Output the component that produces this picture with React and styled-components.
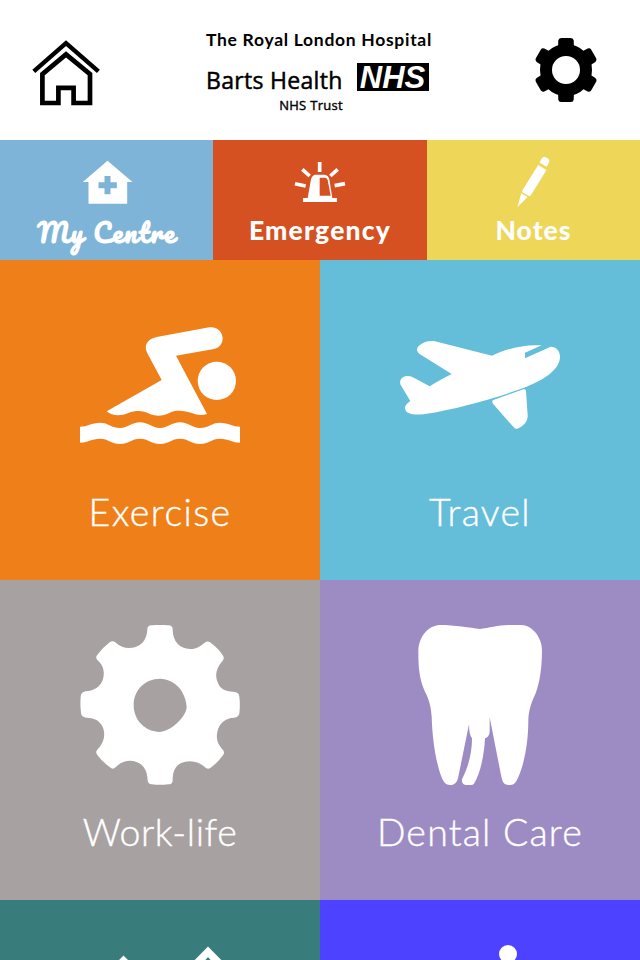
import React from "react";
import styled, { createGlobalStyle } from "styled-components";

const GlobalStyle = createGlobalStyle`
  * {
    box-sizing: border-box;
  }
  body {
    margin: 0;
    background: #fff;
    font-family: Lato, "Open Sans", sans-serif;
  }
`;

function HomeIcon() {
  return (
    <svg width="72" height="72" viewBox="30 34.5 72 72" fill="none" stroke="#000">
      <path d="M33.8 71.9 66 43.6 98.4 71.9" strokeWidth="4.4" />
      <path
        d="M42.4 103.5V74.6L66 54.9 90 74.6v28.9H73.6V88.3H58.4v15.2Z"
        strokeWidth="4.7"
      />
    </svg>
  );
}

function SettingsIcon() {
  return (
    <svg width="72" height="72" viewBox="-36 -36 72 72">
      {[0, 60, 120, 180, 240, 300].map((angle) => (
        <path
          key={angle}
          d="M-8-22-7.7-29.5Q-7.4-32-4.9-32H4.9Q7.4-32 7.7-29.5L8-22Z"
          transform={`rotate(${angle})`}
        />
      ))}
      <circle r="20" fill="none" stroke="#000" strokeWidth="12" />
    </svg>
  );
}

function CentreIcon() {
  return (
    <TabSvg viewBox="229.5 48 180 156">
      <path
        fillRule="evenodd"
        d="M321 62 396 126H380V191H264V126H247ZM312 108V127H294V145H312V163H330V145H349V127H330V108Z"
      />
    </TabSvg>
  );
}

function SirenIcon() {
  return (
    <TabSvg viewBox="231 48 180 156">
      <path
        fillRule="evenodd"
        d="M270 174H284L294 118Q297 104 309 104H334Q346 105 349 118L358 174H372V186H270ZM320 113V167H353L344 120Q342 113 335 113Z"
      />
      <path
        d="M320 66V96M268 88 290 108M374 88 352 108M246 131 278 138M396 131 365 137"
        stroke="#fff"
        strokeWidth="11"
      />
    </TabSvg>
  );
}

function PencilIcon() {
  return (
    <TabSvg viewBox="229.5 48 180 156">
      <path d="M336 68 343 55Q346 50 353 51 360 53 365 59 367 63 364 68L358 80Z" />
      <path d="M332 75 357 90 310 166Q307 169 303 167L286 158Q282 155 285 151Z" />
      <path d="M281 160 300 171 270 202Z" />
    </TabSvg>
  );
}

function SwimIcon() {
  return (
    <TileSvg viewBox="60 -15 480 480">
      <path d="M140 304 305 210 262 130C250 105 262 88 290 81L448 52C470 48 488 65 488 85 488 103 476 114 462 117L348 137 441 312C425 317 410 315 398 310 370 300 345 300 330 308 310 318 290 320 270 312 250 302 230 300 205 309 180 320 155 317 140 304Z" />
      <circle cx="470.5" cy="212.5" r="57.5" />
      <path d="M60 350C82 350 95 338 120 338S155 354 180 354 215 337 240 337 275 354 300 354 335 337 360 337 395 354 420 354 455 338 480 338 518 350 540 350V398C518 398 505 386 480 386S445 402 420 402 385 386 360 386 325 402 300 402 265 386 240 386 205 402 180 402 145 386 120 386 82 398 60 398Z" />
    </TileSvg>
  );
}

function PlaneIcon() {
  return (
    <TileSvg viewBox="60 -45 480 480">
      <path d="M75 265C75 255 82 250 91 243L62 195C56 180 68 168 82 168 92 168 100 172 107 176L149 199C170 185 195 172 215 162L120 103C108 95 108 82 120 75 133 64 148 61 165 64L336 107C375 88 430 72 485 76L435 98V115L512 80C530 80 541 95 540 112 539 150 490 180 440 200 350 235 220 268 150 280 110 287 76 285 75 265Z" />
      <path d="M340 240 430 208Q437 206 438 213L443 285C444 305 430 318 412 326Q406 328 401 322L339 251Q334 244 340 240Z" />
    </TileSvg>
  );
}

function CogIcon() {
  return (
    <TileSvg viewBox="60 45 480 480">
      <path
        fillRule="evenodd"
        d="M262 57Q263 46 275 46 300 43 325 46 338 47 338 58C338 95 360 117 390 117 412 117 425 105 434 98Q442 91 450 97 475 115 489 137 494 145 488 152C464 178 464 205 478 227 488 240 500 244 520 245Q538 246 538 260 541 285 538 310 537 322 522 323C495 324 478 340 472 365 467 390 475 405 489 420Q495 428 489 436 473 458 452 473 443 480 434 471C415 453 385 449 362 460 342 472 338 490 338 512Q337 523 325 523 300 526 275 523 263 522 263 510C262 475 243 453 210 452 190 452 178 461 167 472Q158 480 150 472 127 455 112 435 105 427 112 419C135 395 138 368 125 345 113 328 100 324 80 323Q64 322 63 308 60 285 62 260 63 247 76 244C105 243 122 228 129 208 136 180 127 163 112 150Q106 143 111 136 128 112 150 96 158 91 166 97C185 115 205 117 225 112 250 103 261 85 262 57ZM300 206C255 206 221 240 221 286 221 330 255 366 300 366 335 363 378 320 380 292 378 245 345 207 300 206Z"
      />
    </TileSvg>
  );
}

function ToothIcon() {
  return (
    <TileSvg viewBox="90 45 480 480">
      <path d="M330 57C355 54 385 45 415 45H455C490 47 516 85 516 120 516 170 510 215 497 250 485 275 476 300 475 330 475 400 462 470 440 512 433 524 425 525 416 525 400 525 397 515 393 495L359 322V365Q358 380 345 385C343 430 332 490 312 521Q307 526 298 525H287Q274 522 276 508C295 470 306 430 306 385Q297 375 297 343L265 500C262 518 252 525 240 525 228 525 222 518 216 505 198 460 187 390 185 320 183 290 178 270 165 245 148 205 145 175 145 125 145 80 175 47 208 45 255 45 300 53 330 57Z" />
    </TileSvg>
  );
}

function PeaksIcon() {
  return (
    <TileSvg viewBox="80 945 160 160">
      <path d="M208 946.5 240 979 233 986 208 957 183 986 176 979Z" />
      <path d="M123.5 955.5 156 988 149 995 123.5 969 98 995 91 988Z" />
    </TileSvg>
  );
}

function InfoIcon() {
  return (
    <TileSvg viewBox="400 945 160 160">
      <circle cx="508" cy="954" r="9" />
    </TileSvg>
  );
}

const tabs = [
  { name: "My Centre", color: "#7eb4d8", icon: <CentreIcon />, script: true },
  { name: "Emergency", color: "#d65122", icon: <SirenIcon />, spacing: 1.2 },
  { name: "Notes", color: "#edd658", icon: <PencilIcon />, spacing: 1 },
];

const tiles = [
  { name: "Exercise", color: "#ee7f19", icon: <SwimIcon />, spacing: 1.4 },
  { name: "Travel", color: "#64bdd9", icon: <PlaneIcon />, spacing: 1.3 },
  { name: "Work-life", color: "#a7a1a1", icon: <CogIcon />, spacing: 0.6 },
  { name: "Dental Care", color: "#9d8bc3", icon: <ToothIcon />, spacing: 1.2 },
  { name: "", color: "#387c7b", icon: <PeaksIcon /> },
  { name: "", color: "#4d42ff", icon: <InfoIcon /> },
];

export default function App() {
  return (
    <Screen>
      <GlobalStyle />
      <Header>
        <IconButton aria-label="Home">
          <HomeIcon />
        </IconButton>
        <Brand>
          <Hospital>The Royal London Hospital</Hospital>
          <TrustRow>
            <Trust>Barts Health</Trust>
            <NhsBox>
              <NhsText>NHS</NhsText>
            </NhsBox>
          </TrustRow>
          <TrustSub>NHS Trust</TrustSub>
        </Brand>
        <IconButton aria-label="Settings">
          <SettingsIcon />
        </IconButton>
      </Header>
      <Tabs>
        {tabs.map((tab) => (
          <Tab key={tab.name} $color={tab.color}>
            {tab.icon}
            {tab.script ? (
              <ScriptLabel>{tab.name}</ScriptLabel>
            ) : (
              <TabLabel $spacing={tab.spacing}>{tab.name}</TabLabel>
            )}
          </Tab>
        ))}
      </Tabs>
      <Grid>
        {tiles.map((tile) => (
          <Tile key={tile.color} $color={tile.color}>
            {tile.icon}
            {tile.name && (
              <TileLabel $spacing={tile.spacing}>{tile.name}</TileLabel>
            )}
          </Tile>
        ))}
      </Grid>
    </Screen>
  );
}

const Screen = styled.main`
  width: 640px;
  height: 960px;
  overflow: hidden;
`;

const Header = styled.header`
  display: flex;
  height: 140px;
  padding: 0 38px 0 30px;
`;

const IconButton = styled.button`
  display: flex;
  align-items: center;
  width: 72px;
  padding: 0;
  border: 0;
  background: none;
`;

const Brand = styled.div`
  display: flex;
  flex-direction: column;
  width: 226px;
  margin: 0 98px 0 104px;
  padding-top: 30px;
  color: #000;
  white-space: nowrap;
`;

const Hospital = styled.div`
  font-size: 17.5px;
  font-weight: 700;
  line-height: 20px;
  letter-spacing: 0.7px;
`;

const TrustRow = styled.div`
  display: flex;
  justify-content: space-between;
  margin-top: 13px;
  padding-right: 3.5px;
`;

const Trust = styled.div`
  font-family: "Open Sans", sans-serif;
  font-size: 23px;
  font-weight: 500;
  line-height: 34px;
  letter-spacing: 0.3px;
  -webkit-text-stroke: 0.5px #000;
`;

const NhsBox = styled.div`
  display: flex;
  align-items: center;
  justify-content: center;
  width: 72px;
  height: 28px;
  background: #000;
`;

const NhsText = styled.span`
  padding-top: 2px;
  color: #fff;
  font-family: "Liberation Sans", sans-serif;
  font-size: 31px;
  font-style: italic;
  font-weight: 700;
  line-height: 28px;
`;

const TrustSub = styled.div`
  width: 137px;
  margin-top: 1px;
  font-family: "Open Sans", sans-serif;
  font-size: 13px;
  font-weight: 500;
  line-height: 14px;
  letter-spacing: 0.3px;
  text-align: right;
  -webkit-text-stroke: 0.4px #000;
`;

const Tabs = styled.nav`
  display: grid;
  grid-template-columns: 213px 214px 213px;
  height: 120px;
`;

const Tab = styled.div`
  display: flex;
  flex-direction: column;
  align-items: center;
  padding-top: 16px;
  background: ${(props) => props.$color};
  color: #fff;
`;

const TabSvg = styled.svg`
  width: 60px;
  height: 52px;
  fill: #fff;
`;

const TabLabel = styled.span`
  margin-top: 5px;
  font-size: 26.5px;
  font-weight: 900;
  line-height: 34px;
  letter-spacing: ${(props) => props.$spacing}px;
`;

const ScriptLabel = styled(TabLabel)`
  margin-top: 7px;
  font-family: Pacifico, cursive;
  font-size: 26px;
  font-weight: 700;
  letter-spacing: 1.6px;
`;

const Grid = styled.section`
  display: grid;
  grid-template-columns: 320px 320px;
  grid-auto-rows: 320px;
`;

const Tile = styled.div`
  display: flex;
  flex-direction: column;
  align-items: center;
  padding-top: 45px;
  background: ${(props) => props.$color};
  color: #fff;
`;

const TileSvg = styled.svg`
  width: 160px;
  height: 160px;
  flex-shrink: 0;
  fill: #fff;
`;

const TileLabel = styled.span`
  margin-top: 23px;
  font-size: 37.5px;
  font-weight: 300;
  line-height: 48px;
  letter-spacing: ${(props) => props.$spacing}px;
  -webkit-text-stroke: 0.4px #fff;
`;
